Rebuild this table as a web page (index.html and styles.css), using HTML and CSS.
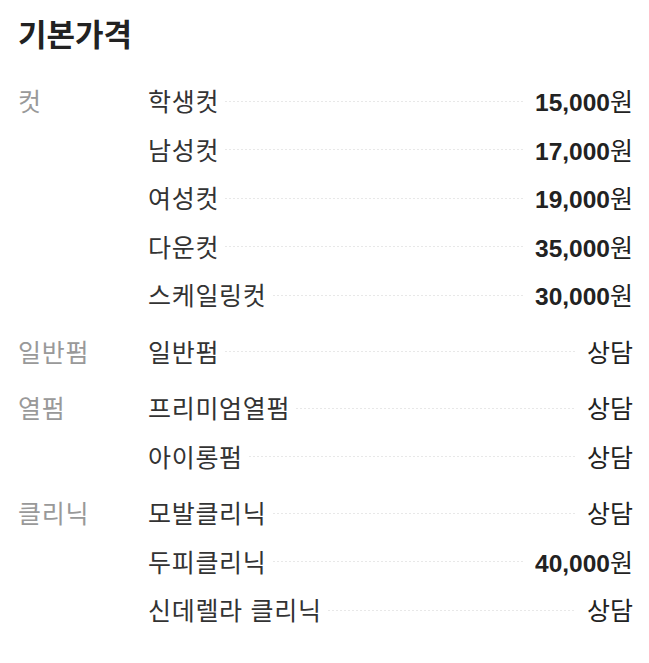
FILE: index.html
```html
<!DOCTYPE html>
<html lang="ko">
<head>
  <meta charset="UTF-8">
  <title>기본가격</title>
  <link rel="stylesheet" href="styles.css">
</head>
<body>
  <div class="price">
    <h2>기본가격</h2>

    <div class="group">
      <div class="cat">컷</div>
      <ul class="items">
        <li><span class="name">학생컷</span><span class="dots"></span><span class="cost"><b>15,000</b>원</span></li>
        <li><span class="name">남성컷</span><span class="dots"></span><span class="cost"><b>17,000</b>원</span></li>
        <li><span class="name">여성컷</span><span class="dots"></span><span class="cost"><b>19,000</b>원</span></li>
        <li><span class="name">다운컷</span><span class="dots"></span><span class="cost"><b>35,000</b>원</span></li>
        <li><span class="name">스케일링컷</span><span class="dots"></span><span class="cost"><b>30,000</b>원</span></li>
      </ul>
    </div>

    <div class="group">
      <div class="cat">일반펌</div>
      <ul class="items">
        <li><span class="name">일반펌</span><span class="dots"></span><span class="cost">상담</span></li>
      </ul>
    </div>

    <div class="group">
      <div class="cat">열펌</div>
      <ul class="items">
        <li><span class="name">프리미엄열펌</span><span class="dots"></span><span class="cost">상담</span></li>
        <li><span class="name">아이롱펌</span><span class="dots"></span><span class="cost">상담</span></li>
      </ul>
    </div>

    <div class="group">
      <div class="cat">클리닉</div>
      <ul class="items">
        <li><span class="name">모발클리닉</span><span class="dots"></span><span class="cost">상담</span></li>
        <li><span class="name">두피클리닉</span><span class="dots"></span><span class="cost"><b>40,000</b>원</span></li>
        <li><span class="name">신데렐라 클리닉</span><span class="dots"></span><span class="cost">상담</span></li>
      </ul>
    </div>
  </div>
</body>
</html>
```

FILE: styles.css
```css
body {
  margin: 0;
  font-family: "Noto Sans CJK KR", "Liberation Sans", sans-serif;
  color: #333;
  background: #fff;
}
.price {
  padding: 12px 16px 0 18px;
}
h2 {
  margin: 0 0 22px;
  font-size: 31px;
  font-weight: bold;
  color: #222;
  line-height: 42px;
}
.group {
  display: flex;
  margin-bottom: 8px;
}
.cat {
  width: 130px;
  flex-shrink: 0;
  font-size: 25px;
  letter-spacing: 0.7px;
  line-height: 48.5px;
  color: #999;
}
.items {
  list-style: none;
  margin: 0;
  padding: 0;
  flex: 1;
}
.items li {
  display: flex;
  align-items: center;
  height: 48.5px;
  font-size: 25px;
}
.name {
  color: #333;
  letter-spacing: 0.7px;
}
.dots {
  flex: 1;
  height: 1px;
  margin: 2px 11px 0 6px;
  background-image: linear-gradient(to right, #e8e8e8 50%, transparent 50%);
  background-size: 4px 1px;
}
.cost {
  color: #222;
}
.cost b {
  font-family: "Liberation Sans", sans-serif;
  font-size: 24.5px;
  font-weight: bold;
}
```
